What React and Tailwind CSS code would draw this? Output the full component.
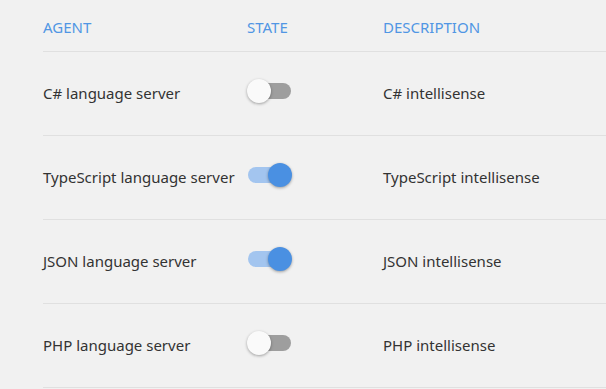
import React from 'react';

const agents = [
  { name: 'C# language server', on: false, desc: 'C# intellisense' },
  { name: 'TypeScript language server', on: true, desc: 'TypeScript intellisense' },
  { name: 'JSON language server', on: true, desc: 'JSON intellisense' },
  { name: 'PHP language server', on: false, desc: 'PHP intellisense' },
];

function Toggle({ on }) {
  return (
    <div className="relative w-[45px] h-6 mb-[6px]">
      <div
        className={
          'absolute left-[1px] right-[1px] top-1 h-4 rounded-full ' +
          (on ? 'bg-[#a3c5ef]' : 'bg-[#9e9e9e]')
        }
      />
      <div
        className={
          'absolute top-0 w-6 h-6 rounded-full shadow-[0_1px_3px_rgba(0,0,0,0.35)] ' +
          (on ? 'right-0 bg-[#4a90e2]' : 'left-0 bg-[#fafafa]')
        }
      />
    </div>
  );
}

export default function App() {
  return (
    <div
      className="min-h-screen bg-[#f1f1f1] pl-[43px] text-[#333333]"
      style={{ fontFamily: '"Noto Sans", sans-serif' }}
    >
      <div className="grid grid-cols-[204px_136px_1fr] h-[52px] pt-[4px] items-center border-b border-[#e0e0e0] text-[15px] text-[#5096e4]">
        <div>AGENT</div>
        <div>STATE</div>
        <div>DESCRIPTION</div>
      </div>
      {agents.map((a) => (
        <div
          key={a.name}
          className="grid grid-cols-[204px_136px_1fr] h-[84px] items-center border-b border-[#e0e0e0] text-[15px]"
        >
          <div>{a.name}</div>
          <div>
            <Toggle on={a.on} />
          </div>
          <div>{a.desc}</div>
        </div>
      ))}
    </div>
  );
}
